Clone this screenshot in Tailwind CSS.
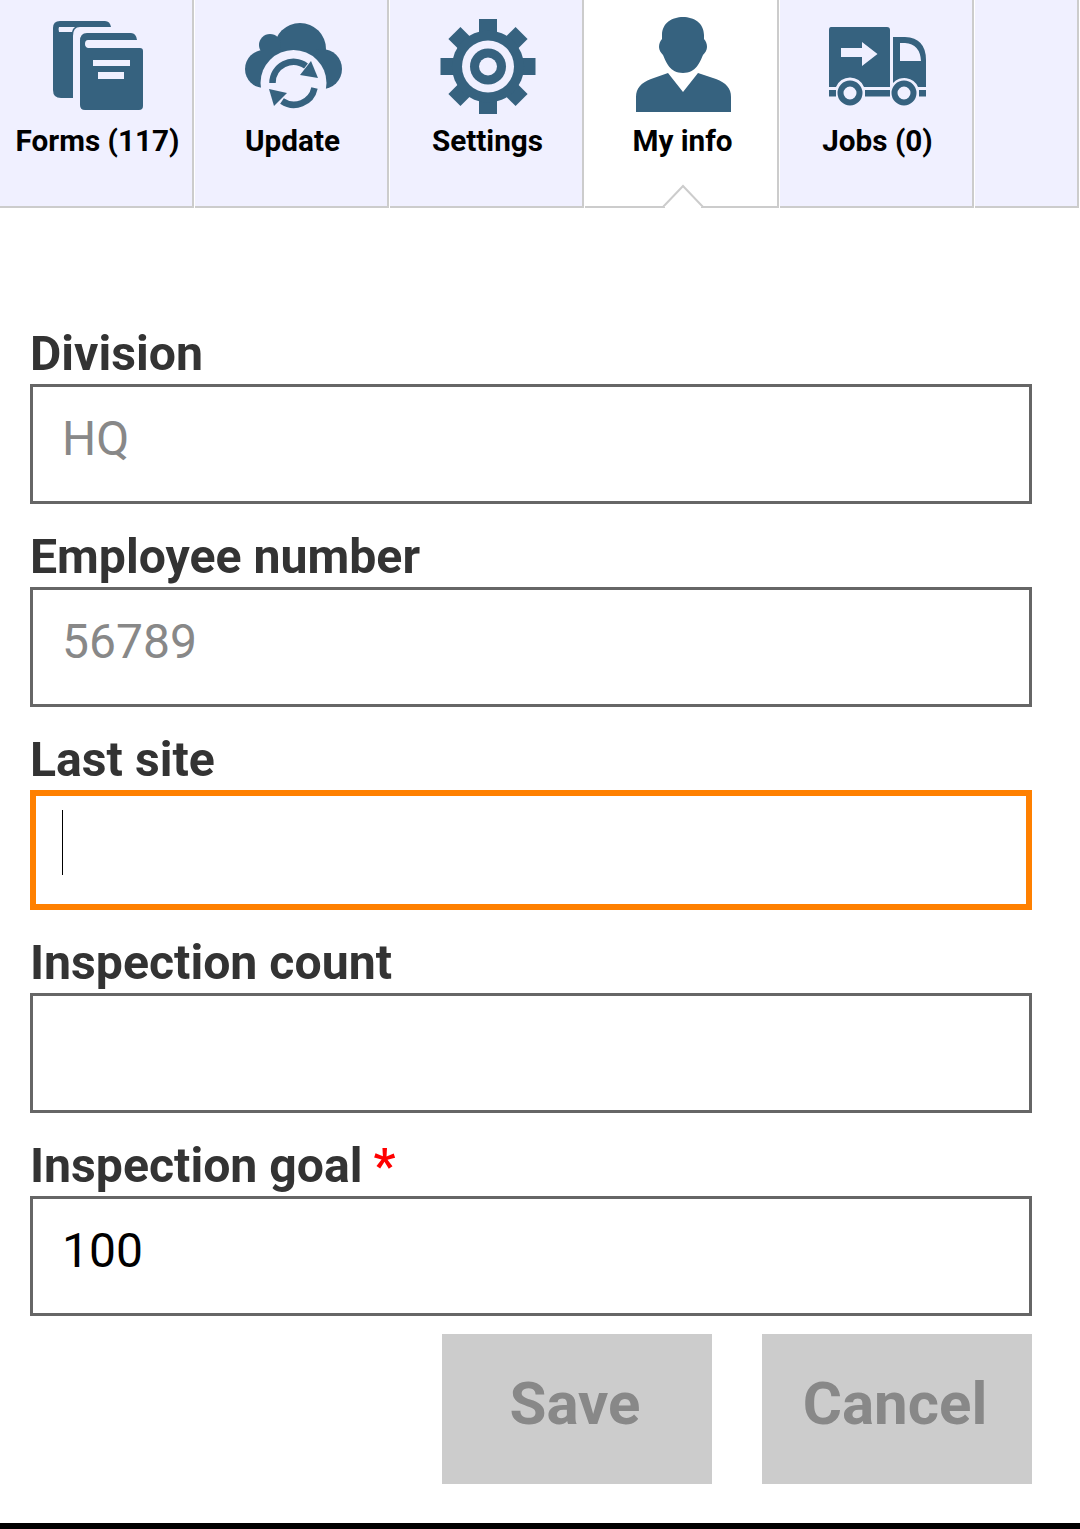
<!DOCTYPE html>
<html lang="en">
<head>
<meta charset="utf-8">
<title>My info</title>
<script src="https://cdn.jsdelivr.net/npm/@tailwindcss/browser@4"></script>
</head>
<body class="bg-white font-['Roboto',sans-serif]">
<div class="flex h-[1529px] w-[1080px] flex-col overflow-hidden">
  <nav class="flex h-[208px] shrink-0 gap-[1px]">
    <a class="flex w-[194px] flex-col items-center border-r-2 border-b-2 border-[#cccccc] bg-[#f0f0ff] pl-[2px]">
      <svg class="mt-[15px] h-[100px] w-[100px] shrink-0" viewBox="47 15 100 100" fill="#36627f">
        <path d="M60 21H105Q110 21 111 27H80Q73 27 73 36V98H61Q53 98 53 90V28Q53 21 60 21Z"/>
        <path d="M59 27H75Q72 29 72 32H59Q58 29 59 27Z" fill="#f0f0ff"/>
        <path fill-rule="evenodd" d="M87 33H131Q136 33 137 40H88Q85 40 85 44Q85 47 88 48H140Q143 48 143 51V106Q143 110 139 110H85Q80 110 80 105V41Q80 33 87 33ZM93 60V66H130V60ZM98 72V79H124V72Z"/>
      </svg>
      <span class="mt-[8px] ml-[1px] text-[29.7px] leading-[36px] font-bold whitespace-nowrap text-black">Forms (117)</span>
    </a>
    <a class="flex w-[194px] flex-col items-center border-r-2 border-b-2 border-[#cccccc] bg-[#f0f0ff] pl-[2px]">
      <svg class="mt-[15px] h-[100px] w-[100px] shrink-0" viewBox="242 15 100 100" fill="#36627f">
        <circle cx="300" cy="49" r="26"/>
        <circle cx="270" cy="45" r="11"/>
        <circle cx="264" cy="69" r="19"/>
        <circle cx="322" cy="69" r="20"/>
        <rect x="264" y="50" width="58" height="38"/>
        <circle cx="293.5" cy="83" r="33" fill="#f0f0ff"/>
        <rect x="255" y="89" width="78" height="25" fill="#f0f0ff"/>
        <path d="M272.5 83A21 21 0 0 1 306 66" fill="none" stroke="#36627f" stroke-width="6.5"/>
        <path d="M314.500 88A21 21 0 0 1 282 101" fill="none" stroke="#36627f" stroke-width="6.500"/>
        <path d="M311 61L318 78L300 75Z"/>
        <path d="M269 89L274 106L287 93Z"/>
      </svg>
      <span class="mt-[8px] ml-[1px] text-[29.7px] leading-[36px] font-bold whitespace-nowrap text-black">Update</span>
    </a>
    <a class="flex w-[194px] flex-col items-center border-r-2 border-b-2 border-[#cccccc] bg-[#f0f0ff] pl-[2px]">
      <svg class="mt-[15px] h-[100px] w-[100px] shrink-0" viewBox="437 15 100 100" fill="#36627f">
        <rect x="479" y="19" width="18" height="95"/>
        <rect x="440.500" y="58" width="95" height="17"/>
        <rect x="479.500" y="19" width="17" height="95" transform="rotate(45 488 66.500)"/>
        <rect x="479.500" y="19" width="17" height="95" transform="rotate(-45 488 66.500)"/>
        <circle cx="488" cy="66.500" r="36"/>
        <circle cx="488" cy="66.500" r="26" fill="#f0f0ff"/>
        <circle cx="488" cy="66.500" r="18"/>
        <circle cx="488" cy="66.500" r="9" fill="#f0f0ff"/>
      </svg>
      <span class="mt-[8px] ml-[1px] text-[29.7px] leading-[36px] font-bold whitespace-nowrap text-black">Settings</span>
    </a>
    <a class="relative flex w-[194px] flex-col items-center border-r-2 border-b-2 border-[#cccccc] bg-white pl-[2px]">
      <svg class="mt-[15px] h-[100px] w-[100px] shrink-0" viewBox="632 15 100 100" fill="#36627f">
        <path d="M662 35C662 23 672 17 683 17C694 17 704 23 704 35V39C706 41 707 44 707 47C707 50 705 53 703 55C700 62 696 73 683 73C670 73 666 62 663 55C661 53 659 50 659 47C659 44 660 41 662 39Z"/>
        <path d="M668 73L683 92L698 73L716 79C726 83 731 88 731 97V112H636V97C636 88 641 83 651 79Z"/>
      </svg>
      <span class="mt-[8px] ml-[1px] text-[29.7px] leading-[36px] font-bold whitespace-nowrap text-black">My info</span>
      <svg class="absolute bottom-[-2px] left-[77px] h-[24px] w-[42px]" viewBox="0 0 42 24"><path d="M0 23H1L21 2L41 23H42" fill="#ffffff" stroke="#cccccc" stroke-width="2"/><rect x="3" y="22" width="36" height="2" fill="#ffffff"/></svg>
    </a>
    <a class="flex w-[194px] flex-col items-center border-r-2 border-b-2 border-[#cccccc] bg-[#f0f0ff] pl-[2px]">
      <svg class="mt-[15px] h-[100px] w-[100px] shrink-0" viewBox="827 15 100 100" fill="#36627f">
        <path fill-rule="evenodd" d="M831 27H887Q890 27 890 30V87H864A15 15 0 0 0 836 87H829V30Q829 27 831 27ZM841 48V57H862V66L877.500 54L862 42V48Z"/>
        <path fill-rule="evenodd" d="M893 37H905Q926 38 926 60V87H918A15 15 0 0 0 893 83ZM900 43V61H921Q920 44 905 43Z"/>
        <rect x="829" y="90" width="7" height="6.500"/>
        <rect x="865" y="90" width="25" height="6.500"/>
        <rect x="919" y="90" width="7" height="6.500"/>
        <circle cx="850" cy="93" r="9.500" fill="none" stroke="#36627f" stroke-width="6"/>
        <circle cx="904" cy="93" r="9.500" fill="none" stroke="#36627f" stroke-width="6"/>
      </svg>
      <span class="mt-[8px] ml-[1px] text-[29.7px] leading-[36px] font-bold whitespace-nowrap text-black">Jobs (0)</span>
    </a>
    <a class="w-[104px] border-r-2 border-b-2 border-[#cccccc] bg-[#f0f0ff]"></a>
  </nav>

  <form class="flex flex-col px-[30px] pt-[93px]">
    <label class="flex h-[83px] items-end pb-[4px] text-[48.2px] leading-[52px] font-bold text-[#333333]">Division</label>
    <input class="h-[120px] w-[1002px] border-[3px] border-[#666666] bg-white px-[29px] pb-[12px] text-[48px] text-[#888888]" value="HQ" disabled>
    <label class="flex h-[83px] items-end pb-[4px] text-[48.2px] leading-[52px] font-bold text-[#333333]">Employee number</label>
    <input class="h-[120px] w-[1002px] border-[3px] border-[#666666] bg-white px-[29px] pb-[12px] text-[48px] text-[#888888]" value="56789" disabled>
    <label class="flex h-[83px] items-end pb-[4px] text-[48.2px] leading-[52px] font-bold text-[#333333]">Last site</label>
    <div class="relative h-[120px] w-[1002px] border-[6px] border-[#ff8000] bg-white">
      <span class="absolute top-[14px] left-[26px] h-[65px] w-[1px] bg-black"></span>
    </div>
    <label class="flex h-[83px] items-end pb-[4px] text-[48.2px] leading-[52px] font-bold text-[#333333]">Inspection count</label>
    <input class="h-[120px] w-[1002px] border-[3px] border-[#666666] bg-white px-[29px] pb-[12px] text-[48px] text-black">
    <label class="flex h-[83px] items-end gap-[11px] pb-[4px] text-[48.2px] leading-[52px] font-bold text-[#333333]">Inspection goal <span class="text-[#ff0000]">*</span></label>
    <input class="h-[120px] w-[1002px] border-[3px] border-[#666666] bg-white px-[29px] pb-[12px] text-[48px] text-black" value="100">
    <div class="mt-[18px] flex w-[1002px] justify-end gap-[50px]">
      <button type="button" class="h-[150px] w-[270px] bg-[#cccccc] pr-[4px] pb-[10px] text-[60px] font-bold text-[#888888]">Save</button>
      <button type="button" class="h-[150px] w-[270px] bg-[#cccccc] pr-[4px] pb-[10px] text-[60px] font-bold text-[#888888]">Cancel</button>
    </div>
  </form>
  <div class="mt-auto h-[6px] shrink-0 bg-black"></div>
</div>
</body>
</html>
